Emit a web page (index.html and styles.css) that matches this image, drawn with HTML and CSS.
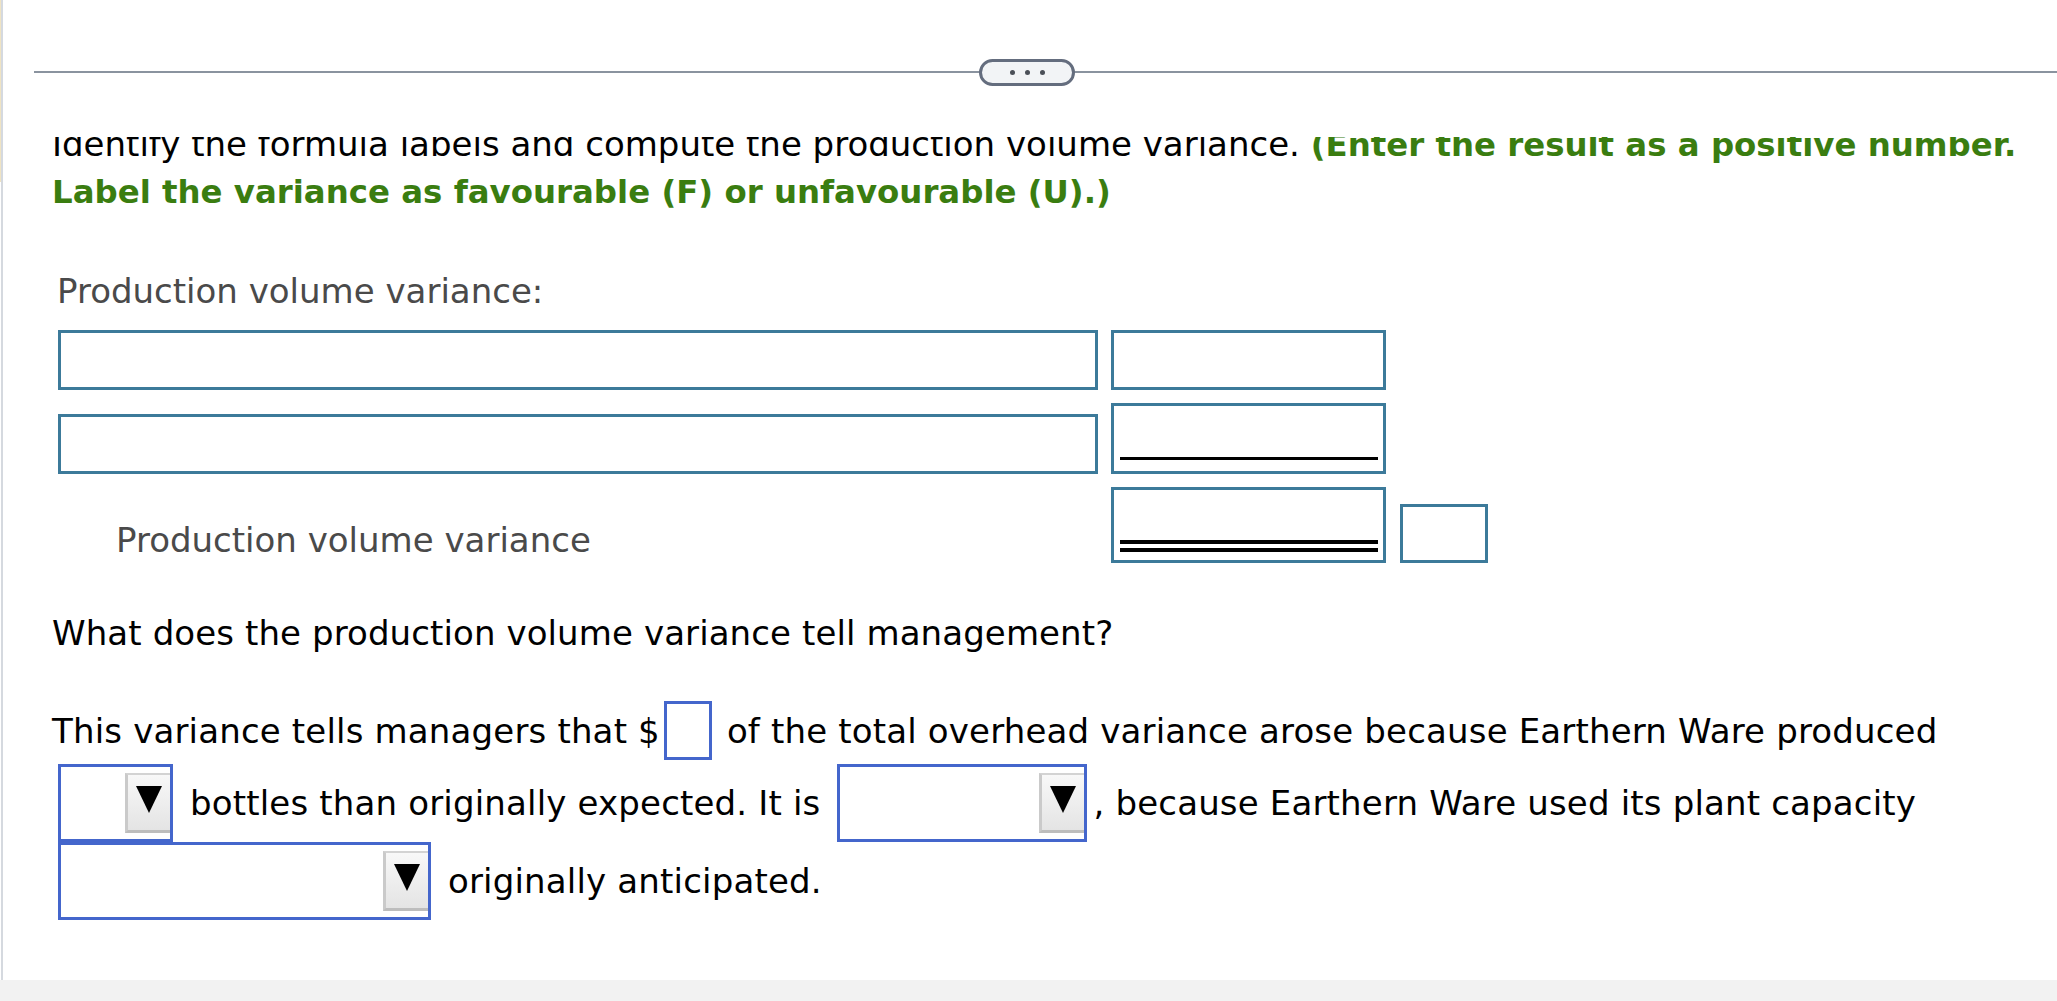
FILE: index.html
```html
<!DOCTYPE html>
<html lang="en">
<head>
<meta charset="utf-8">
<title>Production volume variance</title>
<link rel="stylesheet" href="styles.css">
</head>
<body>
<div class="frame">
  <span class="tan"></span>
  <header class="toolbar">
    <div class="rule"></div>
    <div class="pill"><i></i><i></i><i></i></div>
  </header>
  <main class="content">
    <p class="instr">Identify the formula labels and compute the production volume variance. <strong>(Enter the result as a positive number.<br>Label the variance as favourable (F) or unfavourable (U).)</strong></p>
    <div class="caption">Production volume variance:</div>
    <div class="formula">
      <div class="inp wide"></div>
      <div class="inp amt"></div>
      <div class="empty"></div>
      <div class="inp wide"></div>
      <div class="inp amt sub"><span class="line single"></span></div>
      <div class="empty"></div>
      <div class="total-label">Production volume variance</div>
      <div class="inp amt tot"><span class="line double"></span></div>
      <div class="inp fu"></div>
    </div>
    <p class="question">What does the production volume variance tell management?</p>
    <p class="answer">This variance tells managers that $<span class="blank"></span> of the total overhead variance arose because Earthern Ware produced <span class="select s1"><span class="btn"><svg width="26" height="27" viewBox="0 0 26 27"><path d="M0 0H26L13 27Z"/></svg></span></span> bottles than originally expected. It is <span class="select s2"><span class="btn"><svg width="26" height="27" viewBox="0 0 26 27"><path d="M0 0H26L13 27Z"/></svg></span></span>, because Earthern Ware used its plant capacity <span class="select s3"><span class="btn"><svg width="26" height="27" viewBox="0 0 26 27"><path d="M0 0H26L13 27Z"/></svg></span></span> originally anticipated.</p>
  </main>
</div>
<div class="footer-band"></div>
</body>
</html>
```

FILE: styles.css
```css
html, body {
  margin: 0;
  padding: 0;
  background: #ffffff;
}
body {
  font-family: "DejaVu Sans", "Liberation Sans", sans-serif;
  color: #000;
  font-size: 34px;
}
.frame {
  margin-left: 1px;
  border-left: 2px solid #d5d9df;
  height: 980px;
  box-sizing: border-box;
  position: relative;
}
.tan {
  position: absolute;
  left: -3px;
  top: 0;
  width: 1px;
  height: 182px;
  background: #efe3c3;
}
.toolbar {
  height: 137px;
  box-sizing: border-box;
  padding: 71px 0 0 31px;
  position: relative;
  background: #fff;
}
.rule {
  height: 2px;
  background: #8a939f;
}
.pill {
  position: absolute;
  top: 59px;
  left: calc(50% - 51px);
  width: 96px;
  height: 27px;
  box-sizing: border-box;
  border: 3px solid #646d7e;
  border-radius: 14px;
  background: #f2f4f6;
  display: flex;
  justify-content: center;
  align-items: center;
  gap: 10px;
}
.pill i {
  display: block;
  width: 5px;
  height: 5px;
  border-radius: 50%;
  background: #4b5058;
}
.content {
  display: block;
  height: 843px;
  overflow: hidden;
  box-sizing: border-box;
  padding: 0 12px 0 49px;
}
.instr {
  margin: -16px 0 0 0;
  line-height: 47px;
}
.instr strong {
  color: #3a7d10;
  font-weight: bold;
  font-size: 32.4px;
  line-height: 44px;
}
.caption {
  margin-top: 56px;
  padding-left: 5px;
  line-height: 40px;
  color: #4a4a4a;
}
.formula {
  margin: 19px 0 0 6px;
  display: grid;
  grid-template-columns: 1040px 275px 89px;
  grid-template-rows: 60px 71px 76px;
  column-gap: 13px;
  row-gap: 13px;
  align-items: end;
}
.formula > :nth-child(n+7) {
  margin-top: 1px;
}
.inp {
  box-sizing: border-box;
  border: 3px solid #3c7a9a;
  background: #fff;
}
.wide {
  height: 60px;
}
.amt {
  height: 60px;
}
.amt.sub {
  height: 71px;
  display: flex;
  align-items: flex-end;
  padding: 0 5px 11px 6px;
}
.amt.tot {
  height: 76px;
  display: flex;
  align-items: flex-end;
  padding: 0 5px 8px 6px;
}
.line {
  display: block;
  width: 100%;
  height: 0;
}
.line.single {
  border-bottom: 3px solid #000;
}
.line.double {
  border-bottom: 12px double #000;
}
.fu {
  height: 59px;
  margin-left: 1px;
}
.total-label {
  padding-left: 58px;
  line-height: 40px;
  margin-bottom: 3px;
  color: #4a4a4a;
}
.question {
  margin: 50px 0 0 0;
  line-height: 40px;
  letter-spacing: 0.1px;
}
.answer {
  margin: 45px 0 0 0;
  line-height: 66px;
  letter-spacing: 0.17px;
}
.blank {
  display: inline-block;
  box-sizing: border-box;
  width: 48px;
  height: 59px;
  border: 3px solid #4466cc;
  vertical-align: -17px;
  margin: 0 4px;
}
.select {
  display: inline-block;
  box-sizing: border-box;
  height: 78px;
  border: 3px solid #4466cc;
  vertical-align: -27px;
  overflow: hidden;
  margin: 0 6px;
  padding: 6px 0;
}
.s1 { width: 115px; }
.s2 { width: 250px; }
.s3 { width: 373px; }
.btn {
  display: flex;
  box-sizing: border-box;
  width: 45px;
  height: 60px;
  margin-left: auto;
  border-top: 2px solid #d3d3d3;
  border-left: 3px solid #cacaca;
  border-bottom: 3px solid #bdbdbd;
  background: linear-gradient(#f8f8f8, #e4e4e4);
  justify-content: center;
  align-items: flex-start;
  padding-top: 11px;
}
.btn svg {
  display: block;
  fill: #000;
}
.footer-band {
  height: 21px;
  background: #f2f2f2;
}
```
